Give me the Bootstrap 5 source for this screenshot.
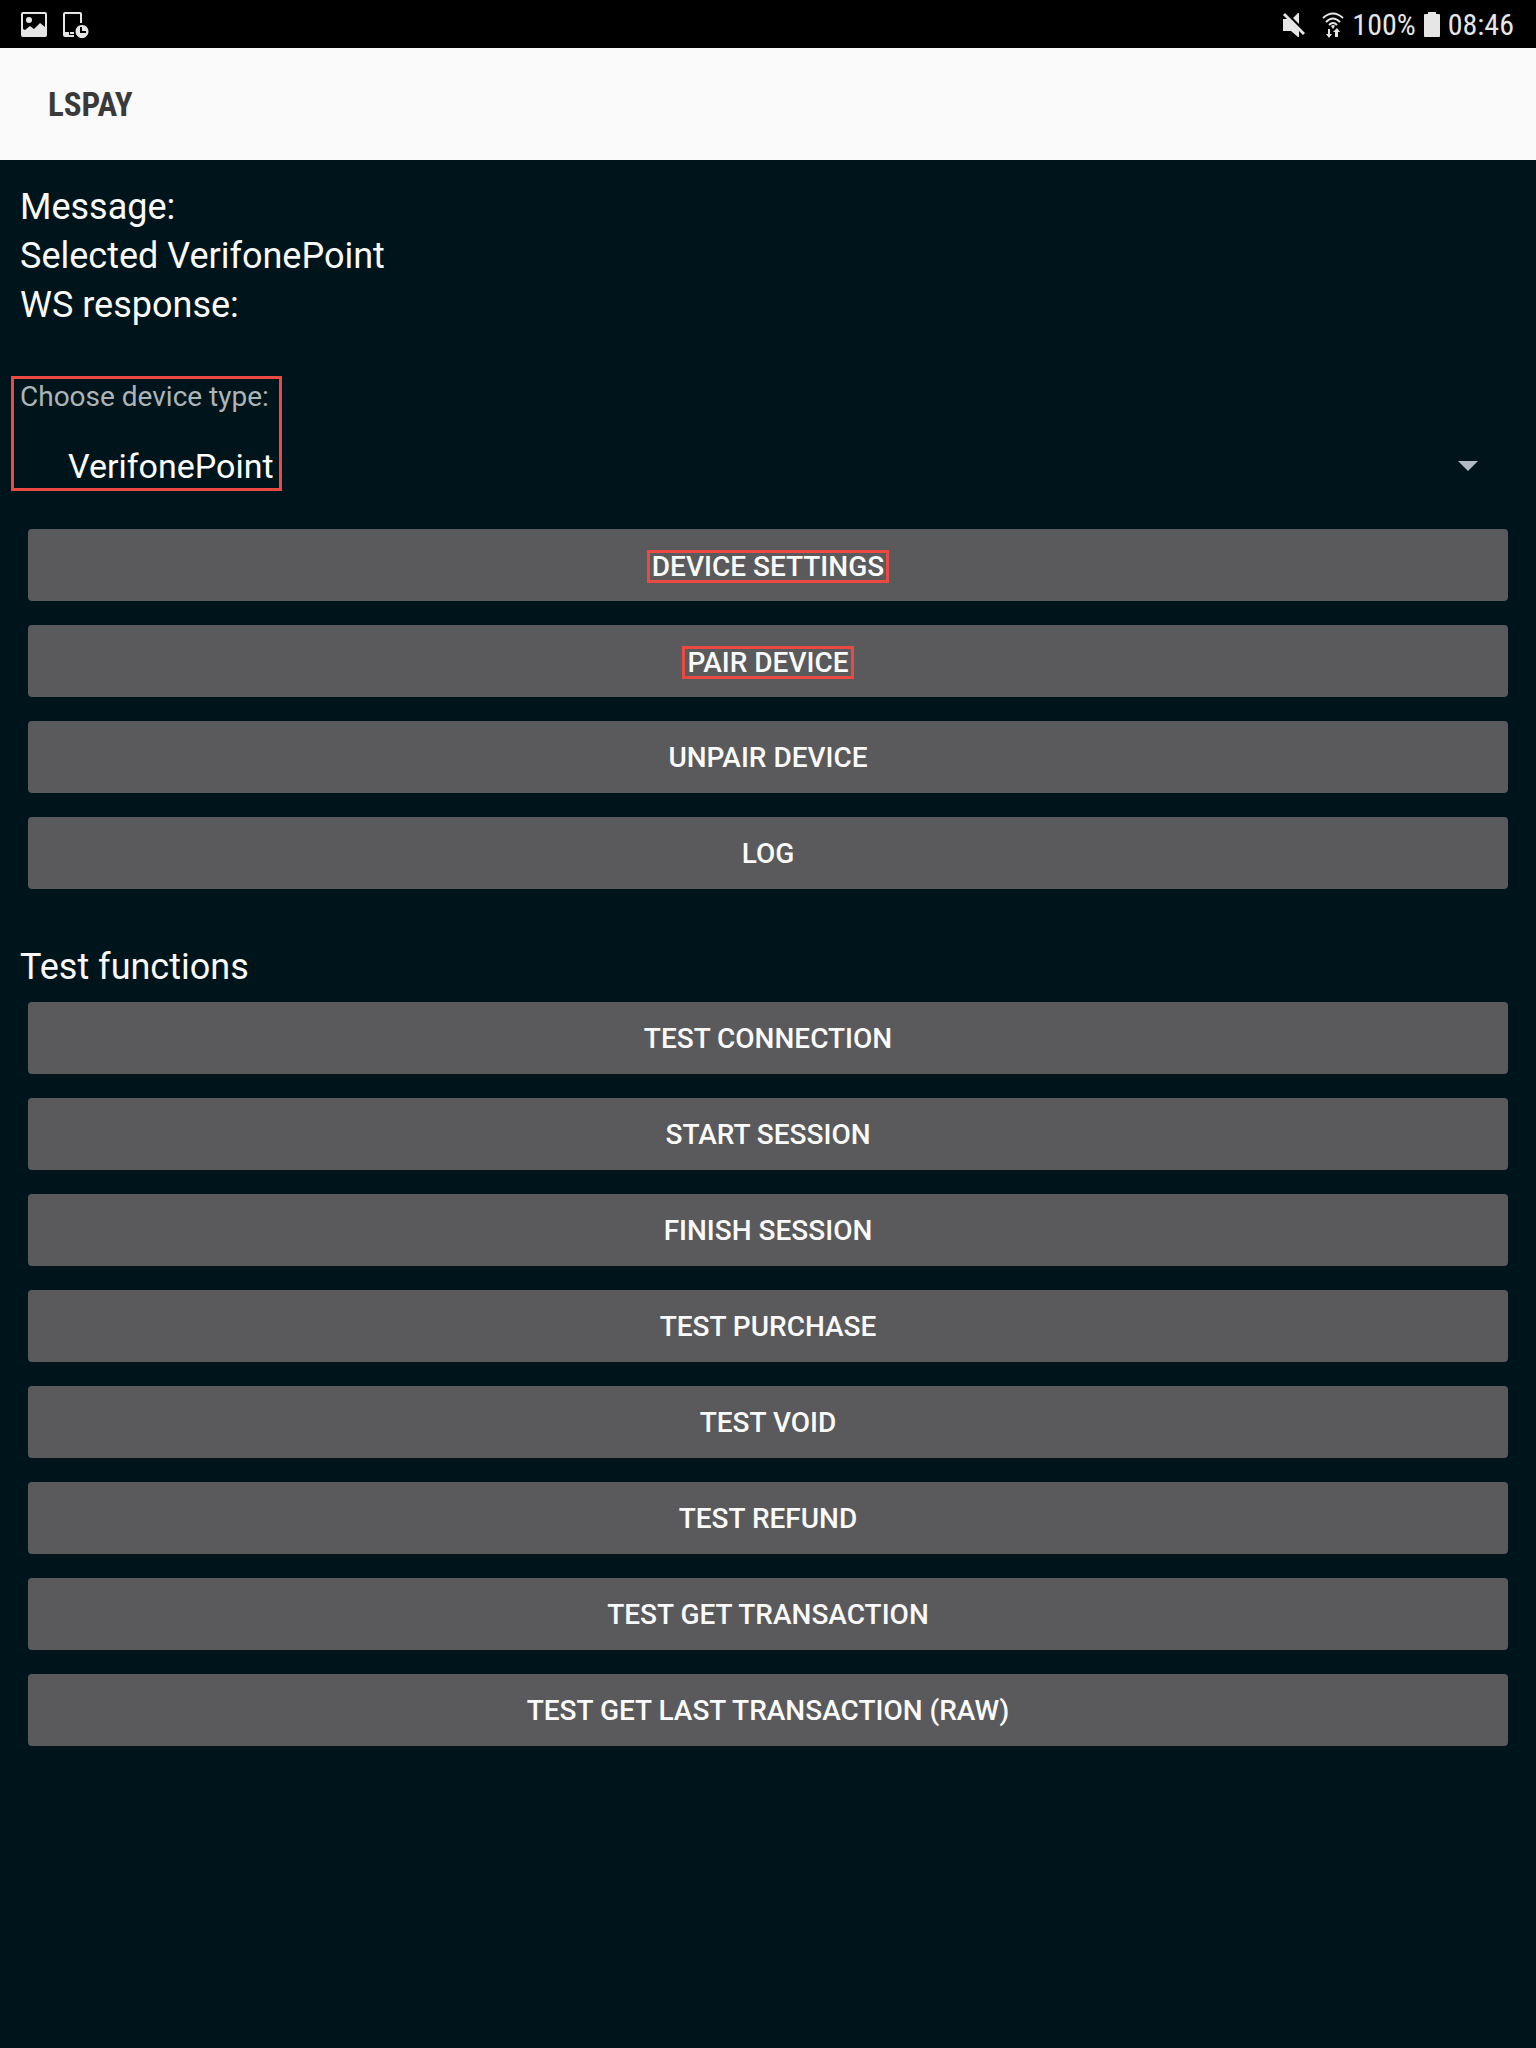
<!DOCTYPE html>
<html lang="en">
<head>
<meta charset="utf-8">
<meta name="viewport" content="width=device-width, initial-scale=1">
<title>LSPAY</title>
<link href="https://cdn.jsdelivr.net/npm/bootstrap@5.3.0/dist/css/bootstrap.min.css" rel="stylesheet">
<style>
body { background: #00151b; color: #fafafa; font-family: Roboto, sans-serif; font-size: 36px; line-height: 49px; }
.status-bar { background: #000; color: #e6e6e6; height: 48px; padding: 2px 22px 0 21px; font-family: "Roboto Condensed", Roboto, sans-serif; font-size: 30px; line-height: 46px; }
.status-bar svg { display: block; fill: #e6e6e6; }
.app-bar { background: #fafafa; height: 112px; padding: 2px 48px 0; }
.app-title { color: #3a3a3a; font-family: "Roboto Condensed", Roboto, sans-serif; font-size: 33px; font-weight: 700; line-height: 48px; }
.screen { padding: 23px 20px 0; }
.device-picker { margin-top: 48px; }
.device-picker label { color: #adb4b6; font-size: 28px; line-height: 38px; }
.device-select { appearance: none; background: transparent; border: 0; border-radius: 0; color: #fff; font-size: 34px; line-height: 48px; height: 64px; padding: 0 48px; margin-top: 18px; box-shadow: none; }
.device-select option { color: #000; }
.select-arrow { right: 38px; bottom: 27px; fill: #b0bac2; pointer-events: none; }
.picker-mark { left: -9px; top: -2px; width: 271px; height: 115px; border: 3px solid #eb4a42; pointer-events: none; }
.action-list { gap: 24px; padding: 0 8px; }
.device-actions { margin-top: 31px; }
.action-list .btn { --bs-btn-bg: #5a5a5c; --bs-btn-color: #fafafa; --bs-btn-hover-bg: #6a6a6c; --bs-btn-hover-color: #fff; --bs-btn-active-bg: #6a6a6c; border: 0; border-radius: 4px; height: 72px; padding: 2px 0 0; font-size: 28px; font-weight: 500; line-height: 32px; }
.label-mark { display: inline-block; border: 3px solid #eb4a42; padding: 0 2px; line-height: 27px; }
.section-title { font-size: 36px; font-weight: 400; line-height: 49px; margin: 54px 0 10px; }
</style>
<script src="https://cdn.jsdelivr.net/npm/bootstrap@5.3.0/dist/js/bootstrap.bundle.min.js"></script>
</head>
<body>
<header>
  <div class="status-bar d-flex align-items-center justify-content-between">
    <div class="d-flex align-items-center gap-3">
      <svg width="26" height="26" viewBox="0 0 26 26" aria-hidden="true"><path fill-rule="evenodd" d="M2 0H24Q26 0 26 2V23Q26 25 24 25H2Q0 25 0 23V2Q0 0 2 0ZM2 2V17L4 18L9 14L13 17L19 11L24 15V2Z"/><circle cx="8" cy="8" r="3"/></svg>
      <svg width="26" height="26" viewBox="0 0 26 26" aria-hidden="true"><path fill-rule="evenodd" d="M2 0H17Q19 0 19 2V11H17V2H2V20H6V23H11V25H2Q0 25 0 23V2Q0 0 2 0Z"/><path d="M7 20H11V22H7Z"/><path fill-rule="evenodd" d="M19 13a6.500 6.500 0 1 0 .01 0ZM17 15H19V19H23V21H17Z"/></svg>
    </div>
    <div class="d-flex align-items-center">
      <svg width="23" height="26" viewBox="0 0 23 26" aria-hidden="true"><path d="M0 7H4L16 19V25H15L8 19H0ZM16 1V12L10 6L15 1ZM2 1L22 21L20 23L0 3Z"/></svg>
      <svg class="ms-3" width="22" height="26" viewBox="0 0 22 26" aria-hidden="true"><g fill="none" stroke="#e6e6e6" stroke-width="2"><path d="M1 6Q11-3 21 6M4 10Q11 3 18 10M7 13Q11 9 15 13"/></g><path d="M9 14Q11 12 13 14L11 17ZM6 17H8V22H10L7 26L4 22H6ZM13 25H16V20H18L15 16L11 20H13Z"/></svg>
      <span class="ms-2">100%</span>
      <svg class="mx-2" width="16" height="26" viewBox="0 0 16 26" aria-hidden="true"><path d="M4 0H12V2H15Q16 2 16 3V24Q16 25 15 25H1Q0 25 0 24V3Q0 2 1 2H4Z"/></svg>
      <span>08:46</span>
    </div>
  </div>
  <div class="app-bar d-flex align-items-center"><h1 class="app-title m-0">LSPAY</h1></div>
</header>
<main class="screen">
  <div>Message:</div>
  <div>Selected VerifonePoint</div>
  <div>WS response:</div>

  <div class="device-picker position-relative">
    <label class="d-block" for="device">Choose device type:</label>
    <select class="device-select d-block w-100" id="device"><option selected>VerifonePoint</option></select>
    <svg class="select-arrow position-absolute" width="20" height="10" viewBox="0 0 20 10" aria-hidden="true"><path d="M0 0H20L10 10Z"/></svg>
    <div class="picker-mark position-absolute"></div>
  </div>

  <div class="action-list device-actions d-grid">
    <button class="btn" type="button"><span class="label-mark">DEVICE SETTINGS</span></button>
    <button class="btn" type="button"><span class="label-mark">PAIR DEVICE</span></button>
    <button class="btn" type="button">UNPAIR DEVICE</button>
    <button class="btn" type="button">LOG</button>
  </div>

  <h2 class="section-title">Test functions</h2>
  <div class="action-list d-grid">
    <button class="btn" type="button">TEST CONNECTION</button>
    <button class="btn" type="button">START SESSION</button>
    <button class="btn" type="button">FINISH SESSION</button>
    <button class="btn" type="button">TEST PURCHASE</button>
    <button class="btn" type="button">TEST VOID</button>
    <button class="btn" type="button">TEST REFUND</button>
    <button class="btn" type="button">TEST GET TRANSACTION</button>
    <button class="btn" type="button">TEST GET LAST TRANSACTION (RAW)</button>
  </div>
</main>
</body>
</html>
